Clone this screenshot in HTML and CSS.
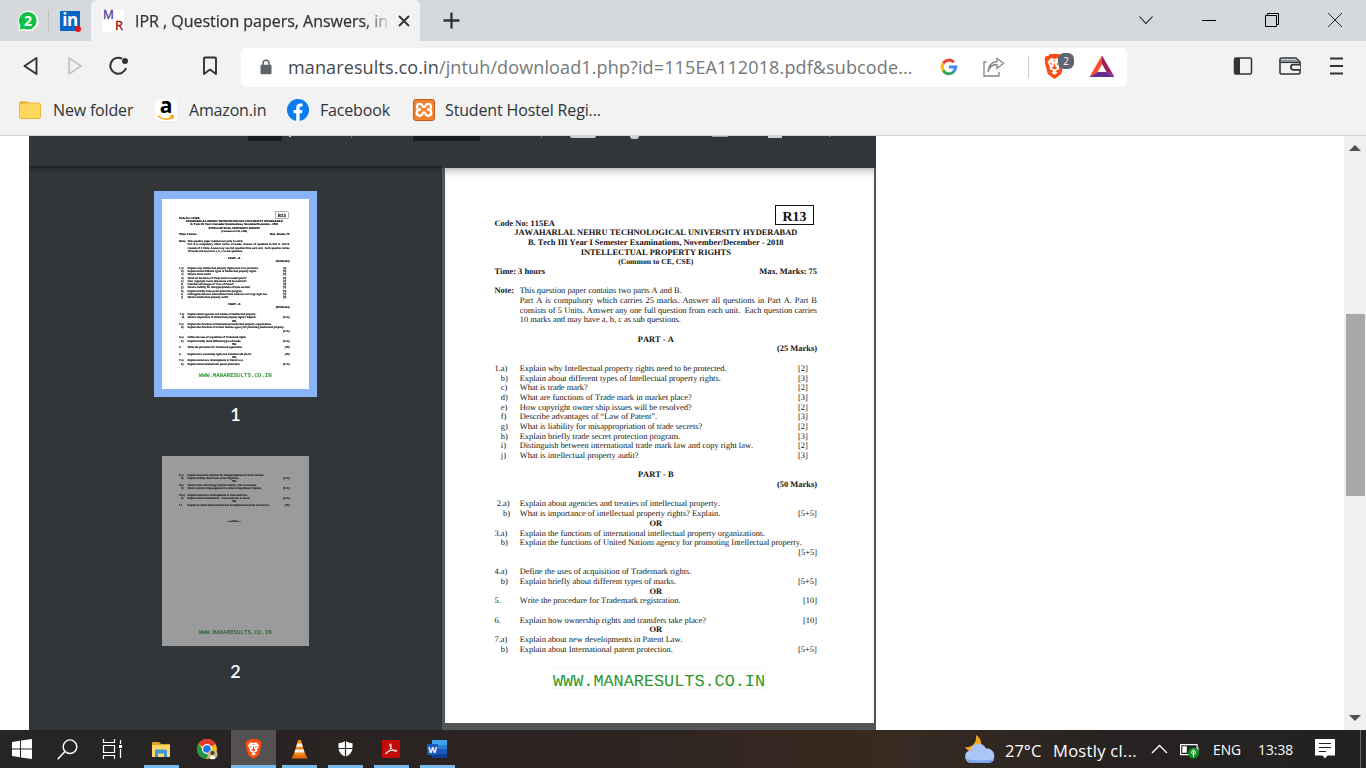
FILE: index.html
```html
<!DOCTYPE html>
<html lang="en">
<head>
<meta charset="utf-8">
<title>IPR , Question papers, Answers</title>
<link rel="stylesheet" href="styles.css">
</head>
<body>
<div class="window">
  <header class="tabstrip">
    <div class="pin pin-wa"><svg width="22" height="22" viewBox="0 0 22 22"><path d="M1 21l1.400-5A10.200 10.200 0 1 1 6.500 20z" fill="#fff"/><path d="M2.500 19.500l1-3.800A8.800 8.800 0 1 1 7 18.700z" fill="#0fc143"/></svg><b class="wa-count">2</b></div>
    <div class="pin pin-in"><span class="linkedin">in</span><i class="dot"></i></div>
    <div class="tab">
      <span class="mr"><b class="m">M</b><b class="r">R</b></span>
      <span class="tab-title">IPR , Question papers, Answers, in</span>
      <svg class="tab-x" width="12" height="12" viewBox="0 0 12 12"><path d="M1 1l10 10M11 1L1 11" stroke="#303438" stroke-width="2"/></svg>
    </div>
    <svg class="plus" width="17" height="17" viewBox="0 0 17 17"><path d="M8.500 .5v16M.5 8.500h16" stroke="#303438" stroke-width="2.300"/></svg>
    <div class="controls">
      <svg width="16" height="16" viewBox="0 0 16 16"><path d="M1.500 4.500L8 11.500l6.500-7" fill="none" stroke="#111" stroke-width="1.100"/></svg>
      <svg width="16" height="16" viewBox="0 0 16 16"><path d="M1 8.500h14" stroke="#000"/></svg>
      <svg width="16" height="16" viewBox="0 0 16 16"><path d="M1.500 3.500h11v11h-11zM3.500 3.500v-2h11v11h-2" fill="none" stroke="#000"/></svg>
      <svg width="16" height="16" viewBox="0 0 16 16"><path d="M1 1l14 14M15 1L1 15" stroke="#222"/></svg>
    </div>
  </header>

  <div class="toolbar">
    <svg class="back" width="16" height="20" viewBox="0 0 16 20"><path d="M13.500 2v16L1.500 10z" fill="none" stroke="#303438" stroke-width="1.900" stroke-linejoin="round"/></svg>
    <svg class="fwd" width="16" height="20" viewBox="0 0 16 20"><path d="M2 2v16l12-8z" fill="none" stroke="#c0c2c4" stroke-width="1.700" stroke-linejoin="round"/></svg>
    <svg class="reload" width="20" height="20" viewBox="0 0 20 20"><path d="M13 2.600A8 8 0 1 0 17 12" fill="none" stroke="#303438" stroke-width="2"/><circle cx="16" cy="5" r="3" fill="#303438"/></svg>
    <svg class="mark" width="16" height="20" viewBox="0 0 16 20"><path d="M2 2.500Q2 1.500 3 1.500h10q1 0 1 1V18l-6-4.500L2 18z" fill="none" stroke="#303438" stroke-width="1.900" stroke-linejoin="round"/></svg>
    <div class="address">
      <svg class="lock" width="12" height="16" viewBox="0 0 12 16"><path d="M3 7V4.200a3 3 0 0 1 6 0V7" fill="none" stroke="#5f6368" stroke-width="1.600"/><rect x=".5" y="5.800" width="11" height="9.500" rx="1.200" fill="#5f6368"/></svg>
      <span class="url"><span class="host">manaresults.co.in</span>/jntuh/download1.php?id=115EA112018.pdf&amp;subcode...</span>
      <svg class="google" width="18" height="18" viewBox="0 0 18 18" fill="none" stroke-width="3"><path d="M3.200 5.400A6.600 6.600 0 0 1 13.800 4.300" stroke="#ea4335"/><path d="M3.400 12.600A6.600 6.600 0 0 1 3.400 5.200" stroke="#fbbc05"/><path d="M13.600 13.800A6.600 6.600 0 0 1 3.200 12.400" stroke="#34a853"/><path d="M9 9h6.800q-.2 3-2.500 5" stroke="#4285f4"/></svg>
      <svg class="share" width="22" height="20" viewBox="0 0 22 20"><path d="M3.500 5H1v14h15v-4M5 15c1-5 4-7.500 9-7.500V11.500l6.500-5.300L14 1.500V4.500C8 5 5.500 9 5 15z" fill="none" stroke="#808386" stroke-width="1.300"/></svg>
      <i class="sep"></i>
      <div class="shields"><svg width="21" height="25" viewBox="0 0 21 25"><use href="#lion"/></svg><span class="count">2</span></div>
      <svg class="bat" width="26" height="23" viewBox="0 0 26 23"><path d="M13 .5L.5 22 8.500 17 13 9z" fill="#ff4724"/><path d="M13 .5L25.500 22 17.500 17 13 9z" fill="#9e1f63"/><path d="M.5 22h25l-8-5h-9z" fill="#662d91"/></svg>
    </div>
    <svg class="side" width="20" height="18" viewBox="0 0 20 18"><rect x="1.500" y="1" width="17" height="16" rx="1.500" fill="none" stroke="#303438" stroke-width="1.500"/><path d="M1 1h6v16H1z" fill="#303438"/></svg>
    <svg class="wallet" width="22" height="20" viewBox="0 0 22 20"><path d="M1 3.500Q1 2 2.500 2H17l4 4v10.500q0 1.500-1.500 1.500h-17Q1 18 1 16.500z" fill="none" stroke="#303438" stroke-width="1.600" stroke-linejoin="round"/><path d="M2 4.700h17" stroke="#8b8e91" stroke-width="2"/><path d="M1.500 6.400h19" stroke="#303438" stroke-width="1.300"/><path d="M21 8.700h-6.500a2.600 2.600 0 0 0 0 5.200H21" fill="#f2f2f2" stroke="#303438" stroke-width="1.700"/></svg>
    <svg class="menu" width="13" height="18" viewBox="0 0 13 18"><path d="M0 1.500h13M0 9h13M0 16.500h13" stroke="#303438" stroke-width="2"/></svg>
  </div>

  <nav class="bookmarks">
    <svg class="bk-folder" width="22" height="18" viewBox="0 0 22 18"><path d="M.5 3V1.500q0-1 1-1H8L10 3z" fill="#e0a21f"/><rect x=".5" y="2" width="21" height="15.500" rx="1.500" fill="#ffd75e" stroke="#eab838"/></svg>
    <span class="bk t-folder">New folder</span>
    <span class="amz"><b>a</b><svg width="18" height="6" viewBox="0 0 18 6"><path d="M1 1q8 6 14.500 1M13 1l3-.2-.5 3" fill="none" stroke="#ff9900" stroke-width="1.500"/></svg></span>
    <span class="bk t-amz">Amazon.in</span>
    <svg class="fb" width="22" height="22" viewBox="0 0 22 22"><circle cx="11" cy="11" r="11" fill="#087cf0"/><path d="M9.200 22v-7.700H6.500v-3.200h2.700V8.700c0-2.800 1.700-4.300 4.200-4.300l2.200.2v2.800h-1.300c-1.300 0-1.700.8-1.700 1.600v2.100h2.900l-.5 3.200h-2.400V22z" fill="#fff"/></svg>
    <span class="bk t-fb">Facebook</span>
    <svg class="xampp" width="22" height="22" viewBox="0 0 22 22"><rect x=".5" y=".5" width="21" height="21" rx="2.500" fill="#f08330" stroke="#c85a14"/><path d="M8 10.700H6.800a2.900 2.900 0 1 1 2.800-3.900q.4 1.200 1.400 1.200t1.400-1.200a2.900 2.900 0 1 1 2.800 3.900H14h1.200a3 3 0 1 1-2.800 4q-.4-1.300-1.400-1.300t-1.400 1.300a3 3 0 1 1-2.800-4" fill="none" stroke="#fff" stroke-width="2.300"/></svg>
    <span class="bk t-st">Student Hostel Regi...</span>
  </nav>

  <main class="content">
    <div class="viewer">
      <div class="viewer-bar">
        <i class="bit b1"></i><i class="bit b2"></i><i class="bit b3"></i><i class="bit b4"></i><i class="bit b5"></i><i class="bit b6"></i><i class="bit b7"></i><i class="bit b8"></i><i class="bit b9"></i><i class="bit b10"></i>
      </div>
      <div class="viewer-body">
        <aside class="thumbs">
          <div class="thumb active"><div class="mini" id="mini1"></div></div>
          <span class="num n1">1</span>
          <div class="thumb second"><div class="mini">
            <div class="page">
              <div class="q"><span>8.a)</span><span>Explain about the remedies for misappropriation of Trade Secrets.</span></div>
              <div class="q sub"><span>b)</span><span>Explain briefly about trade secret litigations.</span><span>[5+5]</span></div>
              <div class="c">OR</div>
              <div class="q"><span>9.a)</span><span>What is false advertising? Explain briefly, with an example.</span></div>
              <div class="q sub"><span>b)</span><span>What is product disparagement in online competitions? Explain.</span><span>[5+5]</span></div>
              <div class="gap"></div>
              <div class="q"><span>10.a)</span><span>Explain about new developments in trade mark law.</span></div>
              <div class="q sub"><span>b)</span><span>Explain about international – trade mark law in detail.</span><span>[5+5]</span></div>
              <div class="c">OR</div>
              <div class="q"><span>11.</span><span>Explain in detail about international developments in trade secrets law.</span><span class="end">[10]</span></div>
              <div class="gap g4"></div>
              <div class="c">---ooOoo---</div>
              <div class="watermark">WWW.MANARESULTS.CO.IN</div>
            </div>
          </div></div>
          <span class="num n2">2</span>
        </aside>
        <section class="pane">
          <article class="page" id="page1">
            <div class="r13">R13</div>
            <div class="bold">Code No: 115EA</div>
            <div class="c">JAWAHARLAL NEHRU TECHNOLOGICAL UNIVERSITY HYDERABAD</div>
            <div class="c">B. Tech III Year I Semester Examinations, November/December - 2018</div>
            <div class="c">INTELLECTUAL PROPERTY RIGHTS</div>
            <div class="c small">(Common to CE, CSE)</div>
            <div class="split bold"><span>Time: 3 hours</span><span>Max. Marks: 75</span></div>
            <div class="gap"></div>
            <div class="q"><span class="bold">Note:</span><span>This question paper contains two parts A and B.</span></div>
            <div class="note"><div class="just">Part A is compulsory which carries 25 marks. Answer all questions in Part A. Part B</div><div class="just">consists of 5 Units. Answer any one full question from each unit.&nbsp; Each question carries</div><div>10 marks and may have a, b, c as sub questions.</div></div>
            <div class="gap"></div>
            <div class="c">PART - A</div>
            <div class="right bold">(25 Marks)</div>
            <div class="gap"></div>
            <div class="q"><span>1.a)</span><span>Explain why Intellectual property rights need to be protected.</span><span>[2]</span></div>
            <div class="q sub"><span>b)</span><span>Explain about different types of Intellectual property rights.</span><span>[3]</span></div>
            <div class="q sub"><span>c)</span><span>What is trade mark?</span><span>[2]</span></div>
            <div class="q sub"><span>d)</span><span>What are functions of Trade mark in market place?</span><span>[3]</span></div>
            <div class="q sub"><span>e)</span><span>How copyright owner ship issues will be resolved?</span><span>[2]</span></div>
            <div class="q sub"><span>f)</span><span>Describe advantages of “Law of Patent”.</span><span>[3]</span></div>
            <div class="q sub"><span>g)</span><span>What is liability for misappropriation of trade secrets?</span><span>[2]</span></div>
            <div class="q sub"><span>h)</span><span>Explain briefly trade secret protection program.</span><span>[3]</span></div>
            <div class="q sub"><span>i)</span><span>Distinguish between international trade mark law and copy right law.</span><span>[2]</span></div>
            <div class="q sub"><span>j)</span><span>What is intellectual property audit?</span><span>[3]</span></div>
            <div class="gap"></div>
            <div class="c">PART - B</div>
            <div class="right bold">(50 Marks)</div>
            <div class="gap"></div>
            <div class="q shift"><span>2.a)</span><span>Explain about agencies and treaties of intellectual property.</span></div>
            <div class="q sub shift"><span>b)</span><span>What is importance of intellectual property rights? Explain.</span><span>[5+5]</span></div>
            <div class="c">OR</div>
            <div class="q"><span>3.a)</span><span>Explain the functions of international intellectual property organizations.</span></div>
            <div class="q sub"><span>b)</span><span>Explain the functions of United Nations agency for promoting Intellectual property.</span></div>
            <div class="right">[5+5]</div>
            <div class="gap"></div>
            <div class="q"><span>4.a)</span><span>Define the uses of acquisition of Trademark rights.</span></div>
            <div class="q sub"><span>b)</span><span>Explain briefly about different types of marks.</span><span>[5+5]</span></div>
            <div class="c">OR</div>
            <div class="q"><span>5.</span><span>Write the procedure for Trademark registration.</span><span class="end">[10]</span></div>
            <div class="gap"></div>
            <div class="q"><span>6.</span><span>Explain how ownership rights and transfers take place?</span><span class="end">[10]</span></div>
            <div class="c">OR</div>
            <div class="q"><span>7.a)</span><span>Explain about new developments in Patent Law.</span></div>
            <div class="q sub"><span>b)</span><span>Explain about International patent protection.</span><span>[5+5]</span></div>
            <div class="watermark">WWW.MANARESULTS.CO.IN</div>
          </article>
        </section>
      </div>
    </div>
    <div class="scrollbar"><i class="up"></i><i class="knob"></i><i class="down"></i></div>
  </main>

  <footer class="taskbar">
    <div class="sys"><svg width="20" height="20" viewBox="0 0 20 20"><path d="M0 3l8-1.200v7.700H0zM9 1.600L20 0v9.500H9zM0 10.500h8v7.700L0 17zM9 10.500h11V20L9 18.400z" fill="#fff"/></svg></div>
    <div class="sys"><svg width="21" height="21" viewBox="0 0 21 21"><circle cx="13" cy="7.700" r="6.800" fill="none" stroke="#fff" stroke-width="1.400"/><path d="M8 12.500L.7 20.200" stroke="#fff" stroke-width="1.500"/></svg></div>
    <div class="sys"><svg width="21" height="20" viewBox="0 0 21 20"><path d="M1.500 0v3.500h11V0M1.500 20v-3.500h11V20M1.500 6.500h11v7h-11zM18.500 1v4M18.500 10v9" fill="none" stroke="#fff" stroke-width="1.200"/><path d="M17 6h3v3h-3z" fill="#fff"/></svg></div>
    <div class="app first run"><svg width="18" height="17" viewBox="0 0 18 17"><path d="M0 1h7l2 2h9v4H0z" fill="#e2a11c"/><path d="M0 4h18v12H0z" fill="#ffd869"/><path d="M3 16v-6q0-1.500 1.500-1.500h9Q15 8.500 15 10v6h-3v-3.500H6V16z" fill="#3a96dd"/></svg></div>
    <div class="app"><svg width="21" height="21" viewBox="0 0 21 21"><circle cx="10" cy="10" r="10" fill="#fbc116"/><path d="M10 10L1.300 5A10 10 0 0 1 18.700 5z" fill="#e33b2e"/><path d="M1.300 5A10 10 0 0 0 9 20l5-8-8-1z" fill="#229342"/><circle cx="10" cy="10" r="5" fill="#fff"/><circle cx="10" cy="10" r="3.800" fill="#1a73e8"/><circle cx="15.500" cy="15.500" r="5" fill="#c8b88a"/><path d="M13 20c0-5 5-5 5 0" fill="#fff"/><circle cx="15.500" cy="14" r="2" fill="#4c3b30"/></svg></div>
    <div class="app run focus"><svg width="17" height="20" viewBox="0 0 21 25"><g id="lion"><path d="M6 0h9l2 2.300 2-.3 1.500 3-.7 2 .4 1.500-3 11.500L10.500 25 3.800 20 .8 8.500 1.200 7 .5 5 2 2l2 .3z" fill="#ff4a12"/><path d="M7 4l3.500 1L14 4l3.500 4-2.500 5 .5 2-5 2.500-5-2.500.5-2-2.500-5z" fill="#fff"/><path d="M4.500 8.500l4 1.200L8 11zM16.500 8.500l-4 1.200.5 1.300zM10.500 8.500l1 4 1.800 1.500-2.800 1.500L7.700 14l1.800-1.500zM8 6.500h5l-2.500 1z" fill="#ff4a12"/><path d="M10.500 16.500l3 2-3 2.500-3-2.500z" fill="#fff"/></g></svg></div>
    <div class="app run"><svg width="17" height="19" viewBox="0 0 17 19"><path d="M3 13h11l2.500 5.500H.5z" fill="#e56b0a"/><path d="M7 0h3l4 14.500q-5.500 2-11 0z" fill="#f58a16"/><path d="M6.200 3.500h4.600l1 3.500H5.200zM4.300 9.500h8.400l.9 3H3.400z" fill="#f4f4f4"/></svg></div>
    <div class="app run"><svg width="15" height="16" viewBox="0 0 15 16"><path d="M7.500 0q3 2 7 2.300V7c0 4-3 7-7 8.700C3.500 14 .5 11 .5 7V2.300Q4.500 2 7.500 0z" fill="#fff"/><path d="M7.500 0v16M0 7.500h15" stroke="#292321" stroke-width="1.200"/></svg></div>
    <div class="app run"><svg width="18" height="18" viewBox="0 0 18 18"><rect width="18" height="18" fill="#c20a09"/><path d="M4.500 13.500c3-2 4.800-5.500 4.700-8.500-.1-1.500-1.600-1.300-1.400 0C8.200 8 11 11.200 13.800 11.500c1.400 0 1.200-1.300-.2-1.400-3 0-7 .7-9.300 2.300-1.200 1-.6 1.900.2 1.100z" fill="none" stroke="#fff" stroke-width="1"/></svg></div>
    <div class="app run"><span class="word"><i class="sheet"></i><b>W</b></span></div>
    <svg class="weather" width="31" height="30" viewBox="0 0 31 30"><path d="M12 1c5 3 7 9 3 14-4 4-10 4-14-2C8 14 13 9 12 1z" fill="#f5a623"/><path d="M7 29a6.500 6.500 0 0 1-.8-12.800A8.500 8.500 0 0 1 22 14.500 7.300 7.300 0 0 1 24 29z" fill="#a9c6f5"/><path d="M2 25q2 4 5 4h17q5 0 6.500-4Q16 28 2 25z" fill="#7aa5ea"/></svg>
    <span class="temp">27°C</span><span class="sky">Mostly cl...</span>
    <svg class="chev" width="17" height="10" viewBox="0 0 17 10"><path d="M1 9l7.500-7.500L16 9" fill="none" stroke="#fff" stroke-width="1.300"/></svg>
    <svg class="batt" width="19" height="16" viewBox="0 0 19 16"><path d="M.6 1.600h16.500v10H.6z" fill="none" stroke="#fff" stroke-width="1.200"/><path d="M2.300 3.300h4.500v6.500H2.300zM17.500 4.500h1v4h-1z" fill="#fff"/><circle cx="13.500" cy="10" r="5.500" fill="#0f8f1e"/><path d="M13.500 14V8m-1.800 1.500q0-2 1.800-3 1.800 1 1.800 3t-1.800 2q-1.800 0-1.800-2z" fill="none" stroke="#fff"/></svg>
    <span class="lang">ENG</span><span class="clock">13:38</span>
    <svg class="notif" width="20" height="20" viewBox="0 0 20 20"><path d="M0 0h20v16.500h-7.500L10 19.500l-2.500-3H0z" fill="#fff"/><path d="M4 4.500h12M4 8.500h12M4 12.500h7" stroke="#232020" stroke-width="1.200"/></svg>
    <i class="peek"></i>
  </footer>
</div>
<script src="script.js"></script>
</body>
</html>
```
FILE: script.js
```js
// The first thumbnail is a scaled copy of the open page.
const copy = document.getElementById('page1').cloneNode(true);
copy.removeAttribute('id');
document.getElementById('mini1').appendChild(copy);
```
FILE: styles.css
```css
* { box-sizing: border-box; }
body { margin: 0; font-family: "Open Sans", "Noto Sans", sans-serif; color: #303438; }
svg { display: block; flex: none; overflow: visible; }
i { display: block; font-style: normal; }
span { white-space: nowrap; }
.window { width: 1366px; height: 768px; display: flex; flex-direction: column; overflow: hidden; background: #fff; }

/* tab strip */
.tabstrip { height: 41px; flex: none; background: #d5d9dc; display: flex; align-items: center; }
.pin { position: relative; height: 22px; flex: none; }
.pin-wa { width: 32px; margin-left: 17px; border-right: 1px solid #bfc3c5; }
.wa-count { position: absolute; left: 0; top: 0; width: 22px; line-height: 21px; text-align: center; color: #fff; font-size: 14px; }
.pin-in { width: 20px; margin-left: 11px; }
.linkedin { display: block; width: 20px; height: 20px; margin-top: 1px; background: #0a66c2; color: #fff; font-weight: 700; font-size: 17px; line-height: 18px; text-align: center; letter-spacing: -.5px; }
.dot { position: absolute; width: 6px; height: 6px; border-radius: 50%; background: #e0101c; right: -1px; bottom: 0; }
.tab { width: 329px; height: 41px; margin-left: 11px; background: #f2f2f2; border-radius: 6px 6px 0 0; display: flex; align-items: center; flex: none; }
.mr { position: relative; width: 22px; height: 22px; margin-left: 11px; background: #fff; font-size: 12px; line-height: 12px; }
.mr b { position: absolute; font-weight: 400; -webkit-text-stroke: .4px; }
.m { left: 1px; top: -1px; color: #5a3fa0; }
.r { right: 1px; bottom: 1px; color: #a01818; font-size: 13px; }
.tab-title { margin-left: 11px; width: 252px; overflow: hidden; font-size: 16px; letter-spacing: -.02px; color: #303438; -webkit-text-stroke: .25px; -webkit-mask-image: linear-gradient(90deg, #000 228px, transparent 258px); }
.tab-x { margin-left: 11px; }
.plus { margin-left: 23px; }
.controls { margin-left: auto; margin-right: 23px; margin-top: -1px; display: flex; gap: 47px; }

/* toolbar */
.toolbar { height: 51px; flex: none; background: #f2f2f2; display: flex; align-items: center; }
.toolbar > svg { margin-top: -1px; }
.back { margin-left: 23px; } .fwd { margin-left: 28px; } .reload { margin-left: 26px; } .mark { margin-left: 73px; }
.address { width: 886px; height: 39px; margin: 1px 0 0 23px; background: #fff; border-radius: 6px; display: flex; align-items: center; flex: none; }
.lock { margin-left: 19px; }
.url { width: 626px; margin-left: 16px; margin-top: -1px; font-size: 18px; letter-spacing: .125px; color: #75787b; }
.host { color: #46494c; }
.google { margin-left: 26px; } .share { margin-left: 25px; }
.sep { width: 1px; height: 22px; background: #c8cacc; margin-left: 23px; }
.shields { position: relative; margin-left: 15px; margin-top: -2px; }
.count { position: absolute; left: 14px; top: -1px; width: 16px; height: 16px; border-radius: 6px; background: #5f6270; color: #fff; font-size: 10px; line-height: 16px; text-align: center; }
.bat { margin-left: 24px; margin-top: -2px; }
.side { margin-left: 106px; } .wallet { margin-left: 26px; } .menu { margin-left: 29px; }

/* bookmarks */
.bookmarks { height: 44px; flex: none; background: #f2f2f2; border-bottom: 1px solid #d0d3d5; display: flex; align-items: center; padding-bottom: 7px; }
.bk { font-size: 16px; letter-spacing: -.17px; flex: none; }
.bk-folder { margin-left: 19px; }
.t-folder { margin-left: 12px; width: 81px; }
.amz { margin-left: 21px; width: 22px; height: 22px; background: #fff; border-radius: 4px; display: flex; flex-direction: column; align-items: center; color: #000; font-size: 21px; line-height: 16px; }
.amz b { height: 16px; line-height: 13px; }
.t-amz { margin-left: 12px; width: 77px; }
.fb { margin-left: 21px; }
.t-fb { margin-left: 11px; width: 71px; }
.xampp { margin-left: 22px; }
.t-st { margin-left: 10px; letter-spacing: -.14px; }

/* content */
.content { height: 594px; flex: none; display: flex; justify-content: space-between; background: #fff; }
.viewer { width: 847px; margin-left: 29px; background: #323639; display: flex; flex-direction: column; }
.viewer-bar { height: 30px; position: relative; flex: none; }
.bit { position: absolute; top: 0; height: 1px; background: #cfd1d3; }
.b1 { left: 219px; width: 34px; height: 5px; background: #191b1c; }
.b2 { left: 260px; width: 2px; }
.b3 { left: 322px; width: 1px; height: 2px; background: #6c7073; }
.b4 { left: 384px; width: 67px; height: 5px; background: #191b1c; }
.b5 { left: 512px; width: 1px; height: 2px; background: #6c7073; }
.b6 { left: 541px; width: 26px; height: 2px; border-radius: 0 0 2px 2px; }
.b7 { left: 601px; width: 9px; height: 3px; border-radius: 0 0 4px 4px; }
.b8 { left: 683px; width: 16px; background: #9fa2a4; }
.b9 { left: 739px; width: 14px; height: 2px; }
.b10 { left: 800px; width: 2px; background: #6c7073; }
.viewer-body { flex: 1; display: flex; }
.thumbs { width: 413px; display: flex; flex-direction: column; align-items: center; box-shadow: inset 0 5px 5px -3px #1d2022; padding: 25px 0 0 0; }
.thumb { width: 147px; height: 190px; overflow: hidden; background: #fff; flex: none; }
.active { width: 163px; height: 206px; border: 8px solid #8ab4f8; }
.second { margin-top: 32px; opacity: .5; }
.mini { width: 429px; height: 555px; transform: scale(.3427); transform-origin: 0 0; }
.mini .page { filter: blur(.7px); -webkit-text-stroke: .5px; }
.num { font-family: Lato, sans-serif; color: #fff; font-size: 18px; line-height: 20px; font-weight: 600; }
.n1 { margin-top: 7px; } .n2 { margin-top: 15px; }
.pane { flex: 1; background: #525659; padding: 2px 2px 0 3px; box-shadow: inset 0 2px #323639; }
#page1 { box-shadow: inset 0 8px 8px -6px #aaa; }

/* exam page */
.page { position: relative; width: 429px; height: 555px; background: #fff; padding: 50.500px 57px 0 49.500px; color: #111; font: 8.430px/9.700px "Liberation Serif", serif; font-kerning: none; text-rendering: geometricPrecision; }
.page > div:not(.gap):not(.watermark):not(.note):not(.r13) { height: 9.700px; }
.bold, .q .bold { font-weight: 700; }
.c { text-align: center; font-weight: 700; }
.small { font-size: 7.700px; }
.right { text-align: right; }
.split { display: flex; justify-content: space-between; }
.gap { height: 9.700px; }
.page .g4 { height: 38.700px; }
.note { padding-left: 25.200px; }
.just { text-align-last: justify; white-space: nowrap; }
.q { display: grid; grid-template-columns: 25.200px 278.300px 19px; }
.q.sub > span:first-child { padding-left: 6.300px; }
.q.shift > span:first-child { margin-left: 2.300px; }
.end { text-align: right; }
.r13 { position: absolute; left: 330px; top: 37px; width: 39px; height: 20px; border: 1px solid #111; font-size: 13.800px; line-height: 22px; font-weight: 700; text-align: center; }
.watermark { position: absolute; left: 107px; top: 500px; width: 214px; height: 21px; border: 1px solid #fdf6ee; color: #2a972a; font: 16.830px/27px "Liberation Mono", monospace; white-space: nowrap; }

/* scrollbar */
.scrollbar { width: 22px; background: #f0f0f0; display: flex; flex-direction: column; align-items: center; }
.up { border: 6px solid transparent; border-top: 0; border-bottom: 6px solid #505050; margin-top: 9px; }
.knob { width: 19px; height: 182px; background: #a8a8a8; margin: 163px 0 0 1px; }
.down { border: 6px solid transparent; border-bottom: 0; border-top: 6px solid #505050; margin-top: auto; margin-bottom: 9px; }

/* taskbar */
.taskbar { height: 38px; flex: none; display: flex; align-items: center; color: #fff; background: linear-gradient(90deg, #262626 0, #292322 25%, #2d2422 45%, #38291f 62%, #352a22 68%, #262221 82%, #222 100%); }
.sys { width: 45px; display: flex; justify-content: center; flex: none; padding-right: 1px; }
.app { width: 46px; height: 38px; display: flex; align-items: center; justify-content: center; flex: none; }
.first { margin-left: 3px; }
.run { background: linear-gradient(#76b9ed, #76b9ed) 50% 100% / 35px 3px no-repeat; }
.focus { background: linear-gradient(#76b9ed, #76b9ed) 50% 100% / 45px 3px no-repeat, linear-gradient(#555150, #555150) 50% 0 / 45px 38px no-repeat; }
.word { position: relative; width: 20px; height: 18px; }
.sheet { position: absolute; left: 5px; top: 0; width: 15px; height: 18px; background: linear-gradient(#41a5ee 25%, #2b7cd3 25% 50%, #185abd 50% 75%, #103f91 75%); }
.word b { position: absolute; left: 0; top: 4px; width: 11px; height: 11px; background: #185abd; color: #fff; font-size: 9px; line-height: 11px; text-align: center; }
.weather { margin-left: 504px; }
.temp { margin-left: 10px; width: 38px; font-size: 16.500px; margin-top: 2px; }
.sky { margin-left: 10px; width: 84px; font-size: 16.500px; letter-spacing: .3px; margin-top: 2px; }
.chev { margin-left: 14px; }
.batt { margin-left: 12px; margin-top: 4px; }
.lang { margin-left: 14px; width: 29px; font-size: 13.800px; }
.clock { margin-left: 16px; width: 35px; font-size: 13.800px; }
.notif { margin-left: 22px; margin-top: -1px; }
.peek { width: 1px; height: 38px; background: #6b6866; margin-left: auto; margin-right: 5px; }
```
